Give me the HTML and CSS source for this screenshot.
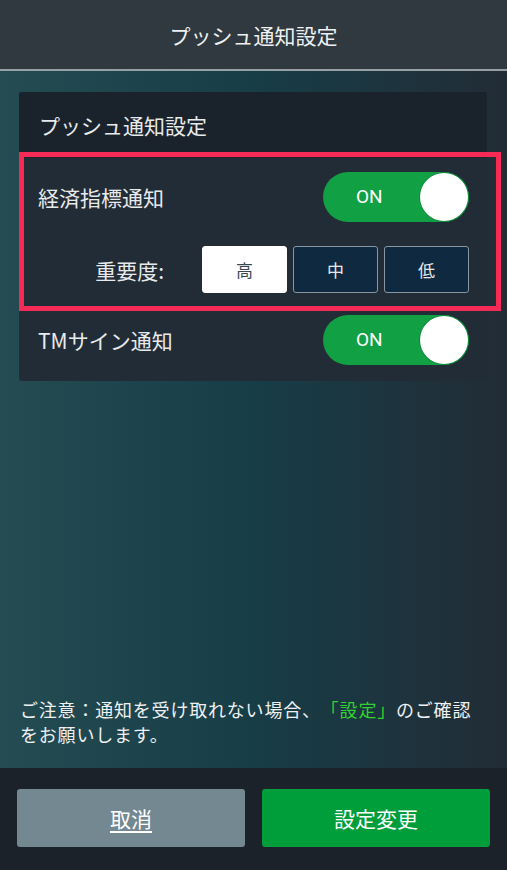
FILE: index.html
```html
<!DOCTYPE html>
<html lang="ja">
<head>
    <meta charset="UTF-8">
    <meta name="viewport" content="width=device-width, initial-scale=1.0">
    <title>プッシュ通知設定</title>
    <link rel="stylesheet" href="styles.css">
</head>
<body>

<header class="top-bar">
    <h1>プッシュ通知設定</h1>
</header>

<main class="content">
    <section class="card">
        <h2 class="card-title">プッシュ通知設定</h2>

        <div class="row">
            <span class="label">経済指標通知</span>
            <div class="toggle">
                <span class="toggle-text">ON</span>
                <span class="knob"></span>
            </div>
        </div>

        <div class="row level-row">
            <span class="label">重要度:</span>
            <div class="segments">
                <button class="seg active">高</button>
                <button class="seg">中</button>
                <button class="seg">低</button>
            </div>
        </div>

        <div class="row last-row">
            <span class="label">TMサイン通知</span>
            <div class="toggle">
                <span class="toggle-text">ON</span>
                <span class="knob"></span>
            </div>
        </div>

        <!-- annotation frame -->
        <div class="highlight"></div>
    </section>

    <p class="note">ご注意：通知を受け取れない場合、<span class="green">「設定」</span>のご確認をお願いします。</p>
</main>

<footer class="actions">
    <button class="btn cancel">取消</button>
    <button class="btn submit">設定変更</button>
</footer>

</body>
</html>
```

FILE: styles.css
```css
/* General */
html, body {
    height: 100%;
}
body {
    margin: 0;
    font-family: "Noto Sans CJK JP", "Noto Sans", sans-serif;
    color: #e8ecee;
    display: flex;
    flex-direction: column;
    background: linear-gradient(to right, #244c52 0%, #173d47 50%, #222c36 100%);
}

/* Header */
.top-bar {
    height: 69px;
    background: #2f393f;
    border-bottom: 2px solid #97a1a5;
    display: flex;
    align-items: center;
    justify-content: center;
    flex-shrink: 0;
}
.top-bar h1 {
    margin: 0;
    font-size: 21px;
    font-weight: normal;
    color: #eef0f1;
}

/* Main */
.content {
    flex: 1;
    display: flex;
    flex-direction: column;
    padding: 21px 20px 0 19px;
}
.card {
    position: relative;
    background: #222c36;
    border-radius: 3px;
    padding-bottom: 16px;
}
.card-title {
    margin: 0;
    height: 66px;
    line-height: 66px;
    padding-left: 20px;
    font-size: 21px;
    font-weight: normal;
    color: #e8eaec;
    background: #1a232b;
    border-radius: 3px 3px 0 0;
}
.row {
    display: flex;
    align-items: center;
    justify-content: space-between;
    padding: 0 18px 0 19px;
    margin-top: 14px;
}
.label {
    font-size: 21px;
    color: #e8eaec;
}
.level-row {
    justify-content: flex-end;
    margin-top: 24px;
}
.level-row .label {
    margin-right: 38px;
}
.last-row {
    margin-top: 22px;
}

/* Toggle */
.toggle {
    position: relative;
    width: 146px;
    height: 50px;
    border-radius: 25px;
    background: #11a044;
}
.toggle-text {
    position: absolute;
    left: 33px;
    top: 0;
    line-height: 50px;
    font-family: Roboto, "Liberation Sans", sans-serif;
    font-size: 19px;
    color: #ffffff;
}
.knob {
    position: absolute;
    right: 1px;
    top: 1px;
    width: 48px;
    height: 48px;
    border-radius: 50%;
    background: #ffffff;
    box-shadow: 0 0 0 1px #0d8a39;
}

/* Importance segments */
.segments {
    display: flex;
    gap: 6px;
}
.seg {
    width: 85px;
    height: 47px;
    border: 1px solid #8796a1;
    border-radius: 3px;
    background: #0f2a40;
    color: #e4e8ea;
    font-family: inherit;
    font-size: 17px;
    padding: 0;
}
.seg.active {
    background: #ffffff;
    border-color: #ffffff;
    color: #3a4650;
}

/* Red annotation box */
.highlight {
    position: absolute;
    left: 0;
    top: 60px;
    width: 472px;
    height: 149px;
    border: 5px solid #f52a55;
    pointer-events: none;
}

/* Note */
.note {
    margin: auto 0 21px 1px;
    font-size: 18px;
    letter-spacing: 0.8px;
    line-height: 25px;
    color: #eef0f1;
    text-spacing-trim: space-all;
    font-feature-settings: "fwid" 1;
}
.green {
    color: #2fd22f;
}

/* Footer buttons */
.actions {
    height: 102px;
    box-sizing: border-box;
    padding: 21px 17px 0;
    background: #1b222a;
    display: flex;
    gap: 17px;
    flex-shrink: 0;
}
.btn {
    flex: 1;
    height: 58px;
    border: none;
    border-radius: 3px;
    font-family: inherit;
    font-size: 21px;
    color: #ffffff;
}
.cancel {
    background: #738891;
    text-decoration: underline;
    text-underline-offset: 4px;
}
.submit {
    background: #009e3b;
}
```
